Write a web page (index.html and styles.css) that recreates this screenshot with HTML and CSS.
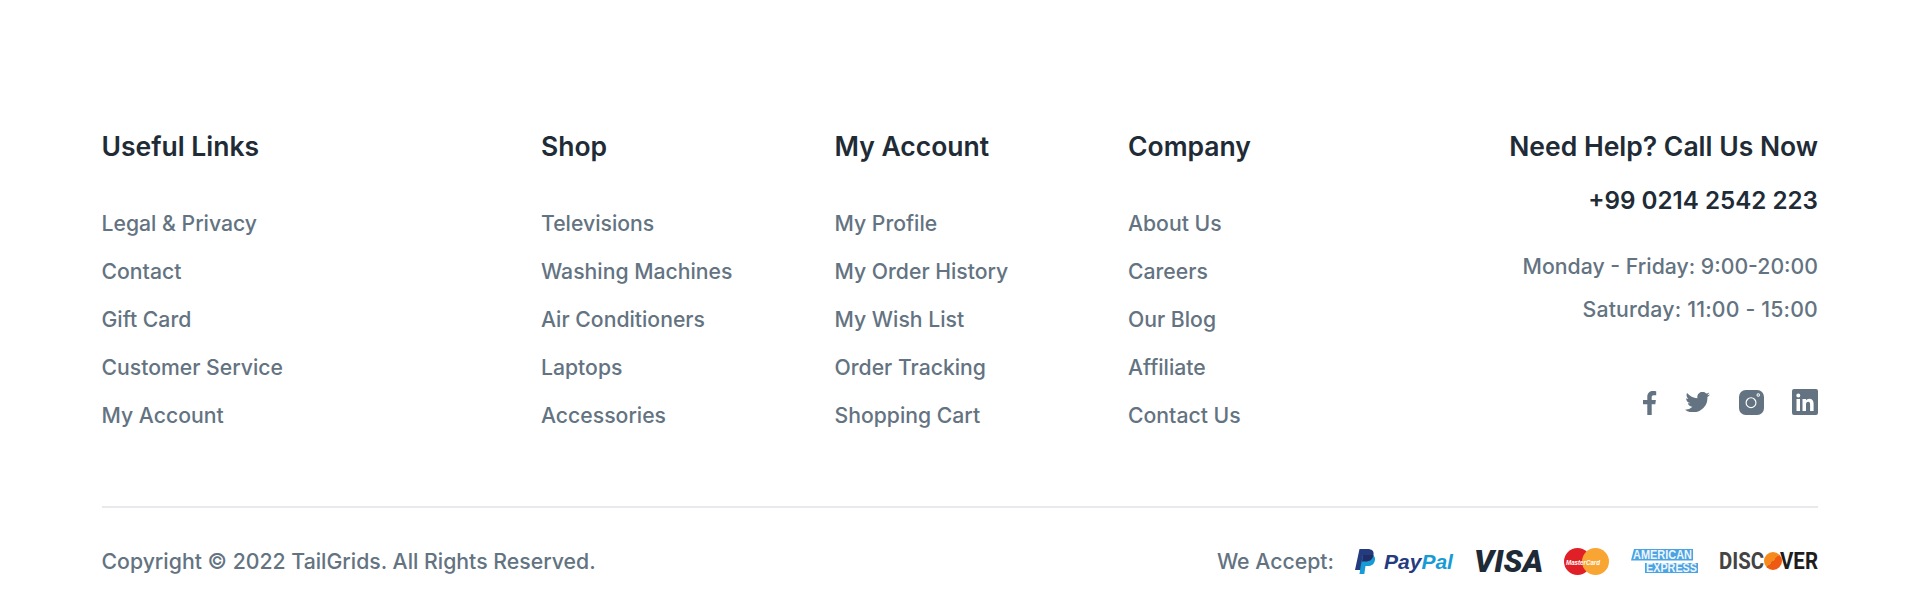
FILE: index.html
```html
<!DOCTYPE html>
<html lang="en">
<head>
<meta charset="utf-8">
<title>Footer</title>
<link rel="stylesheet" href="styles.css">
</head>
<body>
<footer class="footer">
  <div class="cols">
    <section class="col">
      <h4 class="title">Useful Links</h4>
      <ul class="links"><li>Legal &amp; Privacy</li><li>Contact</li><li>Gift Card</li><li>Customer Service</li><li>My Account</li></ul>
    </section>
    <section class="col">
      <h4 class="title">Shop</h4>
      <ul class="links"><li>Televisions</li><li>Washing Machines</li><li>Air Conditioners</li><li>Laptops</li><li>Accessories</li></ul>
    </section>
    <section class="col">
      <h4 class="title">My Account</h4>
      <ul class="links"><li>My Profile</li><li>My Order History</li><li>My Wish List</li><li>Order Tracking</li><li>Shopping Cart</li></ul>
    </section>
    <section class="col">
      <h4 class="title">Company</h4>
      <ul class="links"><li>About Us</li><li>Careers</li><li>Our Blog</li><li>Affiliate</li><li>Contact Us</li></ul>
    </section>
    <section class="col help">
      <h4 class="title">Need Help? Call Us Now</h4>
      <p class="phone">+99 0214 2542 223</p>
      <p class="hours">Monday - Friday: 9:00-20:00</p>
      <p class="hours sat">Saturday: 11:00 - 15:00</p>
      <div class="social">
        <svg class="ico-f" viewBox="0 0 15 25"><path d="M9.700 25V14.200h3.600l.6-4.300H9.700V7.400c0-1.200.4-2.100 2.100-2.100h2.400V1.300C13.700 1.200 12.500 1 11 1 7.900 1 5.300 3 5.300 6.800v3.100H1v4.300h4.300V25z"/></svg>
        <svg class="ico-t" viewBox="0 0 25 20"><path d="M25 2.400c-.9.400-1.900.7-2.900.8 1-.6 1.800-1.600 2.200-2.800-1 .6-2 1-3.200 1.200A5 5 0 0 0 12.500 6.200C8.300 6 4.600 4 2.100.9 1 2.900 1.500 5.400 3.400 6.800c-.8 0-1.600-.3-2.300-.6 0 2.400 1.700 4.400 4 4.900-.7.200-1.500.2-2.300.1.700 2 2.500 3.400 4.700 3.500A10.100 10.100 0 0 1 0 17.700 14.300 14.300 0 0 0 22.400 5c1-.7 1.900-1.600 2.600-2.600z"/></svg>
        <svg class="ico-ig" viewBox="0 0 26 26"><path fill-rule="evenodd" d="M7 0h12a7 7 0 0 1 7 7v12a7 7 0 0 1-7 7H7a7 7 0 0 1-7-7V7a7 7 0 0 1 7-7zm5.500 7.500a5.700 5.700 0 1 0 0 11.400 5.700 5.700 0 0 0 0-11.400zm0 1.200a4.500 4.500 0 1 1 0 9 4.500 4.500 0 0 1 0-9zM20 3.500a1.800 1.800 0 1 0 0 3.600 1.800 1.800 0 0 0 0-3.600zm0 1a.8.800 0 1 1 0 1.600.8.800 0 0 1 0-1.600z"/></svg>
        <svg class="ico-li" viewBox="0 0 26 26"><path fill-rule="evenodd" d="M2 0h22a2 2 0 0 1 2 2v22a2 2 0 0 1-2 2H2a2 2 0 0 1-2-2V2a2 2 0 0 1 2-2zm2.500 10v12H8V10zm1.800-5.500a2 2 0 1 0 0 4 2 2 0 0 0 0-4zM10.500 10v12H14v-6.500c0-1.800.8-2.800 2.200-2.800 1.300 0 1.900.9 1.900 2.600V22h3.500v-7.500c0-3.200-1.700-4.800-4.200-4.800-1.700 0-2.800.8-3.400 1.800V10z"/></svg>
      </div>
    </section>
  </div>
  <div class="bottom">
    <p class="copy">Copyright © 2022 TailGrids. All Rights Reserved.</p>
    <div class="pay">
      <span class="accept">We Accept:</span>
      <svg class="paypal" viewBox="0 0 98 25">
        <path fill="#253b80" d="M4.500 0h8c4.300 0 6.800 2 6 6-.9 4.500-4 6.500-8 6.500H7.500L6 21H0z"/>
        <path fill="#179bd7" d="M8 6h9.500c2.300 1 3 3 2.400 5.500-.8 3.800-3.500 5.500-7 5.500h-2.400L9.300 25H4.500l1.200-8z"/>
        <path fill="#222d65" d="M8 6h10.500c-.8 4.500-3.700 6.500-8 6.500H7z"/>
        <text class="pp" x="29" y="20"><tspan fill="#253b80">Pay</tspan><tspan fill="#179bd7">Pal</tspan></text>
      </svg>
      <svg class="visa" viewBox="0 0 69 22"><text class="visa-text" x="0" y="22">VISA</text></svg>
      <svg class="mc" viewBox="0 0 45 27"><circle cx="13.500" cy="13.500" r="13.500" fill="#e01f27"/><circle cx="31.500" cy="13.500" r="13.500" fill="#f9a533"/><text x="2" y="16.500" class="mc-text" textLength="34" lengthAdjust="spacingAndGlyphs">MasterCard</text></svg>
      <svg class="amex" viewBox="0 0 67 24">
        <path fill="#4aa3e2" d="M3 0h59v11.500H0z"/>
        <path fill="#4aa3e2" d="M14 14h53v10H14z"/>
        <text class="amex-text" x="2" y="10" textLength="59" lengthAdjust="spacingAndGlyphs">AMERICAN</text>
        <text class="amex-text" x="15" y="23" textLength="51" lengthAdjust="spacingAndGlyphs">EXPRESS</text>
      </svg>
      <svg class="discover" viewBox="0 0 99 18">
        <defs><linearGradient id="dg" x1="0" y1="0" x2="1" y2="1"><stop offset=".5" stop-color="#f58a1f"/><stop offset=".5" stop-color="#ee5a12"/></linearGradient></defs>
        <text class="disc-text" x="0" y="17" textLength="45" lengthAdjust="spacingAndGlyphs" fill="#444">DISC</text>
        <circle cx="54" cy="9" r="9" fill="url(#dg)"/>
        <text class="disc-text" x="61" y="17" textLength="38" lengthAdjust="spacingAndGlyphs" fill="#1d1d1d">VER</text>
      </svg>
    </div>
  </div>
</footer>
</body>
</html>
```

FILE: styles.css
```css
* { box-sizing: border-box; margin: 0; padding: 0; }
html, body { background: #fff; }
body { font-family: Inter, "Liberation Sans", sans-serif; color: #637381; height: 610px; overflow: hidden; }
.footer { padding: 128px 102px 0 101.500px; }
.cols { display: grid; grid-template-columns: 439.500px 293.500px 293.500px 1fr auto; padding-bottom: 75px; border-bottom: 2px solid #e7e9ec; }
.title { font-size: 26.500px; line-height: 36px; font-weight: 600; color: #212b36; margin-bottom: 43px; }
.links { list-style: none; }
.links li { font-size: 21.200px; line-height: 32px; font-weight: 500; margin-bottom: 16px; }
.links li:last-child { margin-bottom: 0; }
.help { text-align: right; }
.help .title { margin-bottom: 0; }
.phone { font-size: 24.200px; font-weight: 600; line-height: 36px; color: #212b36; margin-top: 19px; }
.hours { font-size: 21.250px; line-height: 43px; font-weight: 500; }
.sat { letter-spacing: .18px; }
.phone + .hours { margin-top: 26px; }
.social { display: flex; justify-content: flex-end; align-items: center; gap: 28px; margin-top: 58px; }
.social svg { fill: #637381; display: block; }
.ico-f { width: 15px; height: 25px; }
.ico-t { width: 25px; height: 20px; }
.ico-ig { width: 25px; height: 25px; margin-left: 1px; }
.ico-li { width: 26px; height: 26px; }
.bottom { display: flex; justify-content: space-between; align-items: center; height: 106px; }
.copy, .accept { font-size: 21.250px; font-weight: 500; line-height: 32px; }
.pay { display: flex; align-items: center; gap: 21px; }
.paypal { width: 98px; height: 25px; display: block; overflow: visible; }
.pp { font-family: "Liberation Sans", sans-serif; font-style: italic; font-weight: 700; font-size: 21px; }
.visa { width: 69px; height: 22px; display: block; overflow: visible; }
.visa-text { font-family: Roboto, "Liberation Sans", sans-serif; font-style: italic; font-weight: 900; font-size: 31.500px; fill: #1f2a37; }
.mc { width: 45px; height: 27px; display: block; overflow: visible; }
.mc-text { font-family: "Liberation Sans", sans-serif; font-size: 8px; font-weight: 700; font-style: italic; fill: #fff; }
.amex { width: 67px; height: 24px; display: block; overflow: visible; margin-left: 1px; }
.amex-text { font-family: "Liberation Sans", sans-serif; font-size: 12px; font-weight: 700; fill: #eef6fd; }
.discover { width: 99px; height: 18px; display: block; overflow: visible; }
.disc-text { font-family: Roboto, "Liberation Sans", sans-serif; font-size: 24px; font-weight: 700; }
```
